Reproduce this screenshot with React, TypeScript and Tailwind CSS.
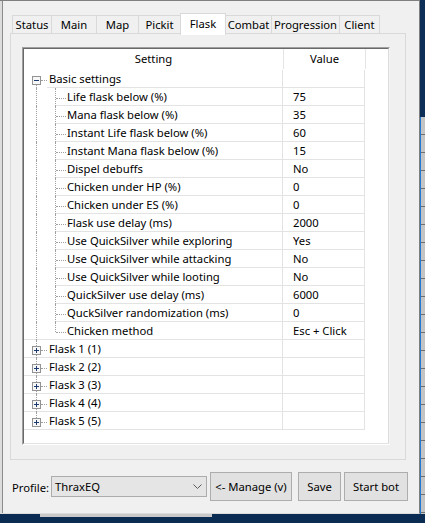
import React from "react"

/* ── Data ── */

const tabs = [
  { name: "Status", w: "w-[40px]" },
  { name: "Main", w: "w-[46px]" },
  { name: "Map", w: "w-[43px]" },
  { name: "Pickit", w: "w-[43px]" },
  { name: "Flask", w: "w-[46px]" },
  { name: "Combat", w: "w-[47px]" },
  { name: "Progression", w: "w-[69px]" },
  { name: "Client", w: "w-[41px]" },
]

const basicSettings: [string, string][] = [
  ["Life flask below (%)", "75"],
  ["Mana flask below (%)", "35"],
  ["Instant Life flask below (%)", "60"],
  ["Instant Mana flask below (%)", "15"],
  ["Dispel debuffs", "No"],
  ["Chicken under HP (%)", "0"],
  ["Chicken under ES (%)", "0"],
  ["Flask use delay (ms)", "2000"],
  ["Use QuickSilver while exploring", "Yes"],
  ["Use QuickSilver while attacking", "No"],
  ["Use QuickSilver while looting", "No"],
  ["QuickSilver use delay (ms)", "6000"],
  ["QuckSilver randomization (ms)", "0"],
  ["Chicken method", "Esc + Click"],
]

const flasks = ["Flask 1 (1)", "Flask 2 (2)", "Flask 3 (3)", "Flask 4 (4)", "Flask 5 (5)"]

const DOT = "border-dotted border-[#a0a0a0]"

/* ── Tree grid pieces ── */

function ExpandBox({ open }: { open: boolean }) {
  return (
    <svg width="9" height="9" viewBox="0 0 9 9" className="absolute left-[8px] top-[6px]">
      <rect x="0.5" y="0.5" width="8" height="8" fill="#f7f7f7" stroke="#939393" />
      <path d="M2 4.5h5" stroke="#1d3b6e" />
      {!open && <path d="M4.5 2v5" stroke="#1d3b6e" />}
    </svg>
  )
}

function ValueCell({ value }: { value?: string }) {
  return (
    <div className="flex w-[82px] shrink-0 items-center border-b border-r border-[#e3e3e3] pl-[10px] pt-[1px]">
      {value}
    </div>
  )
}

function RootRow({ label, open, first, last }: { label: string; open: boolean; first?: boolean; last?: boolean }) {
  return (
    <div className="flex h-[18px]">
      <div className={`relative w-[23px] shrink-0 border-b ${open ? "border-transparent" : "border-[#e3e3e3]"}`}>
        <span
          className={`absolute left-[12px] border-l ${DOT} ${first ? "top-[10px]" : "top-0"} ${last ? "h-[10px]" : "-bottom-px"}`}
        />
        <span className={`absolute left-[17px] top-[10px] w-[6px] border-t ${DOT}`} />
        <ExpandBox open={open} />
      </div>
      <div className="flex w-[236px] shrink-0 items-center border-b border-r border-[#e3e3e3] pl-[2px] pt-[1px]">
        {label}
      </div>
      <ValueCell />
    </div>
  )
}

function ChildRow({ label, value, last }: { label: string; value: string; last?: boolean }) {
  return (
    <div className="flex h-[18px]">
      <div className={`relative w-[31px] shrink-0 border-b ${last ? "border-[#e3e3e3]" : "border-transparent"}`}>
        <span className={`absolute left-[12px] top-0 -bottom-px border-l ${DOT}`} />
      </div>
      <div className="relative flex w-[228px] shrink-0 items-center border-b border-r border-[#e3e3e3] pl-[12px] pt-[1px]">
        <span className={`absolute left-0 top-0 border-l ${DOT} ${last ? "h-[10px]" : "-bottom-px"}`} />
        <span className={`absolute left-[1px] top-[10px] w-[10px] border-t ${DOT}`} />
        {label}
      </div>
      <ValueCell value={value} />
    </div>
  )
}

function SettingsGrid() {
  return (
    <div className="h-[398px] w-[368px] border border-b-white border-l-[#a0a0a0] border-r-[#f4f4f4] border-t-[#a0a0a0]">
      <div className="h-full w-full border border-b-[#e3e3e3] border-l-[#696969] border-r-[#dcdcdc] border-t-[#696969] bg-white">
        <div className="flex h-[20px]">
          <div className="flex w-[260px] justify-center border-r border-[#e5e5e5] pt-[2px]">Setting</div>
          <div className="flex w-[82px] justify-center border-r border-[#e5e5e5] pt-[2px]">Value</div>
        </div>
        <div className="h-px" />
        <RootRow label="Basic settings" open first />
        {basicSettings.map(([label, value], i) => (
          <ChildRow key={label} label={label} value={value} last={i === basicSettings.length - 1} />
        ))}
        {flasks.map((f, i) => (
          <RootRow key={f} label={f} open={false} last={i === flasks.length - 1} />
        ))}
      </div>
    </div>
  )
}

/* ── Window ── */

function Tabs() {
  return (
    <div className="mt-[12px] flex h-[20px] items-start pl-[9px]">
      {tabs.map((t, i) =>
        t.name === "Flask" ? (
          <div
            key={t.name}
            className={`relative z-10 -ml-px flex h-[22px] ${t.w} justify-center border border-b-0 border-[#d9d9d9] bg-white pt-[2px]`}
          >
            {t.name}
          </div>
        ) : (
          <div
            key={t.name}
            className={`${i > 0 ? "-ml-px" : ""} mt-[2px] flex h-[18px] ${t.w} justify-center border border-b-0 border-[#d9d9d9] bg-[#f0f0f0] pt-[1px]`}
          >
            {t.name}
          </div>
        )
      )}
    </div>
  )
}

function BottomBar() {
  return (
    <div className="mt-[12px] flex h-[29px] items-center pl-[9px]">
      <div className="mt-[3px] w-[39px]">Profile:</div>
      <div className="flex h-[21px] w-[156px] items-center justify-between border border-[#acacac] bg-[#e5e5e5] pl-[3px] pr-[4px]">
        <span>ThraxEQ</span>
        <svg width="9" height="5" viewBox="0 0 9 5">
          <path d="M0.5 0.5L4.5 4.5L8.5 0.5" fill="none" stroke="#5a5a5a" />
        </svg>
      </div>
      <button type="button" className="ml-[3px] flex h-[29px] w-[82px] items-center justify-center border border-[#adadad] bg-[#e1e1e1]">
        &lt;- Manage (v)
      </button>
      <button type="button" className="ml-[6px] flex h-[29px] w-[43px] items-center justify-center border border-[#adadad] bg-[#e1e1e1]">
        Save
      </button>
      <button type="button" className="ml-[3px] flex h-[29px] w-[64px] items-center justify-center border border-[#adadad] bg-[#e1e1e1]">
        Start bot
      </button>
    </div>
  )
}

export default function App() {
  return (
    <div className="flex h-[523px] w-[425px] flex-col overflow-hidden bg-[#0b2c52] font-['Noto_Sans',sans-serif] text-[11.25px] leading-[16px] text-black">
      <div className="flex h-[514px]">
        {/* app window */}
        <div className="flex h-[514px] w-[420px] border border-l-0 border-b-[#dcdcdc] border-r-[#7f7f7f] border-t-[#7f7f7f] bg-[#f0f0f0]">
          <div className="w-[2px] bg-[#dcdcdc]" />
          <div className="w-px bg-[#8c8c8c]" />
          <div className="flex flex-1 flex-col">
            <Tabs />
            <div className="ml-[7px] h-[427px] w-[396px] border border-[#d9d9d9] pl-[11px] pt-[13px]">
              <SettingsGrid />
            </div>
            <BottomBar />
          </div>
        </div>

        {/* desktop / window behind */}
        <div className="flex flex-1 flex-col">
          <div className="h-[117px] bg-[#0c2f57]" />
          <div className="flex flex-1 flex-col border-l border-[#1f7bd4] bg-[#c4c4c4]">
            {Array.from({ length: 22 }, (_, i) => (
              <div key={i} className="h-[18px] shrink-0 border-b border-[#707070]" />
            ))}
          </div>
        </div>
      </div>
      <div className="flex-1">
        <div className="ml-[40px] h-[3px] w-[172px] bg-[#c9c9c9]" />
      </div>
    </div>
  )
}
